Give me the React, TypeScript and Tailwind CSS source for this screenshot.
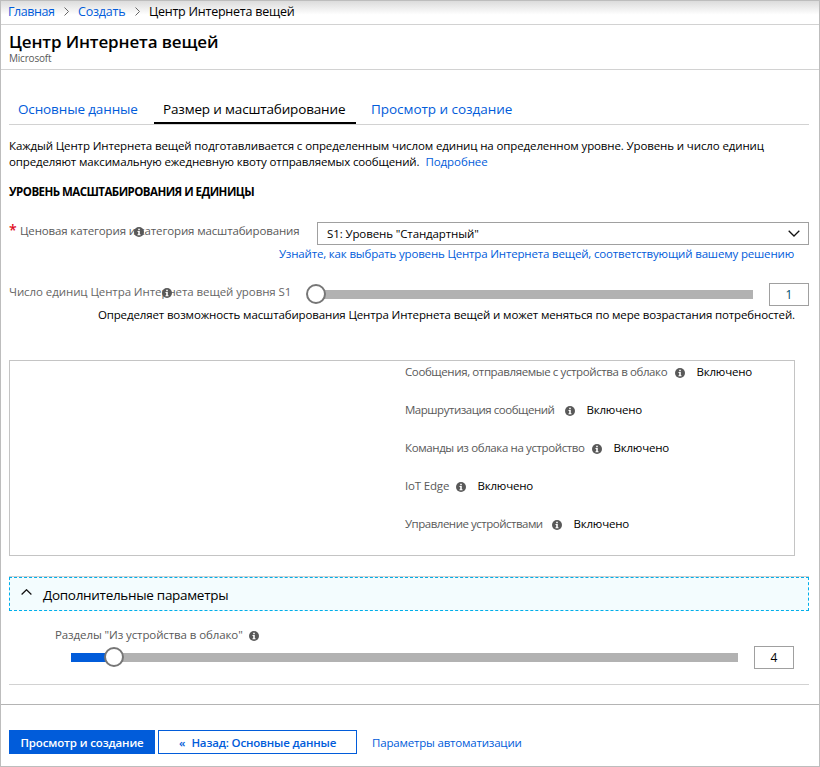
import React from "react";

function InfoIcon({ className = "" }: { className?: string }) {
  return (
    <svg className={`h-[10px] w-[10px] shrink-0 ${className}`} viewBox="0 0 10 10">
      <circle cx="5" cy="5" r="5" fill="#595959" />
      <path d="M4.2 1.7h1.6v1.5H4.2zM3.5 4h2.3v3.3h.7v.9h-3v-.9h.7V4.9h-.7z" fill="#fff" />
    </svg>
  );
}

function Crumb() {
  return (
    <svg className="h-[9px] w-[5px] shrink-0" viewBox="0 0 5 9" fill="none" stroke="#666" strokeWidth="1">
      <path d="M0.5 0.5l4 4-4 4" />
    </svg>
  );
}

function Knob({ className = "" }: { className?: string }) {
  return <div className={`absolute -top-[6px] h-5 w-5 rounded-full border-2 border-[#767676] bg-white ${className}`} />;
}

const features = [
  { label: "Сообщения, отправляемые с устройства в облако", width: "w-[262px] tracking-[-0.39px]", gap: "ml-2" },
  { label: "Маршрутизация сообщений", width: "w-[150px] tracking-[-0.47px]", gap: "ml-[10px]" },
  { label: "Команды из облака на устройство", width: "w-[180px] tracking-[-0.38px]", gap: "ml-[7px]" },
  { label: "IoT Edge", width: "w-[44px] tracking-[-0.17px]", gap: "ml-[7px]" },
  { label: "Управление устройствами", width: "w-[137px] tracking-[-0.49px]", gap: "ml-[10px]" },
];

export default function App() {
  return (
    <div className="flex h-[767px] w-[820px] flex-col overflow-hidden whitespace-nowrap border border-[#bdbdbd] bg-white font-['Open_Sans','Noto_Sans',sans-serif] text-[11.5px] leading-4 text-black">
      <nav className="flex h-6 items-center border-b border-[#d2d2d2] bg-linear-to-b from-[#dcdcdc] to-white to-60% pb-[2px] pl-[7px] text-[12.5px] text-[#015cda]">
        <a className="w-[47px] tracking-[-0.42px]">Главная</a>
        <span className="ml-[9px]"><Crumb /></span>
        <a className="ml-[9px] w-[47px] tracking-[-0.2px]">Создать</a>
        <span className="ml-[10px]"><Crumb /></span>
        <span className="ml-[9px] tracking-[-0.23px] text-black">Центр Интернета вещей</span>
      </nav>

      <header className="h-[45px] border-b border-[#d2d2d2] pl-2 pt-[5px]">
        <h1 className="text-[17px] font-semibold leading-[23px] tracking-[-0.13px]">Центр Интернета вещей</h1>
        <p className="text-[10px] leading-[11px] tracking-[-0.2px] text-[#595959]">Microsoft</p>
      </header>

      <main className="h-[635px] border-b border-[#b4b4b4] px-2">
        <div className="mr-[2px] mt-[27px] flex h-[28px] border-b border-[#d2d2d2] text-[13.5px] leading-6 text-[#015cda]">
          <a className="w-[145px] pl-[9px] tracking-[-0.13px]">Основные данные</a>
          <a className="h-[27px] w-[202px] border-b-2 border-black pl-[9px] tracking-[-0.16px] text-black">Размер и масштабирование</a>
          <a className="pl-[15px] tracking-[-0.03px]">Просмотр и создание</a>
        </div>

        <p className="mt-[13px] tracking-[-0.12px]">Каждый Центр Интернета вещей подготавливается с определенным числом единиц на определенном уровне. Уровень и число единиц</p>
        <p>
          <span className="tracking-[-0.14px]">определяют максимальную ежедневную квоту отправляемых сообщений.</span>
          <a className="ml-[6px] tracking-[-0.08px] text-[#015cda]">Подробнее</a>
        </p>
        <h2 className="mt-[14px] text-[11.5px] font-bold leading-4 tracking-[-0.54px]">УРОВЕНЬ МАСШТАБИРОВАНИЯ И ЕДИНИЦЫ</h2>

        <div className="mr-[2px] mt-[22px] flex h-[23px]">
          <div className="relative w-[308px] text-[#595959]">
            <span className="inline-block w-[11px] text-[14px] font-semibold text-[#e00b1c]">*</span>
            <span className="tracking-[-0.14px]">Ценовая категория и категория масштабирования</span>
            <InfoIcon className="absolute left-[125px] top-[5px]" />
          </div>
          <div className="flex flex-1 items-center justify-between border border-[#a0a0a0] pl-[9px] pr-2">
            <span className="tracking-[-0.11px]">S1: Уровень "Стандартный"</span>
            <svg className="h-[7px] w-3" viewBox="0 0 12 7" fill="none" stroke="#111" strokeWidth="1.3">
              <path d="M.7.8L6 6 11.3.8" />
            </svg>
          </div>
        </div>
        <p className="mr-[17px] mt-px text-right tracking-[-0.17px] text-[#015cda]">Узнайте, как выбрать уровень Центра Интернета вещей, соответствующий вашему решению</p>

        <div className="mr-[2px] mt-[21px] flex h-[23px]">
          <div className="relative w-[299px] pt-px tracking-[-0.08px] text-[#666]">
            Число единиц Центра Интернета вещей уровня S1
            <InfoIcon className="absolute left-[153px] top-[5px]" />
          </div>
          <div className="relative mt-[7px] h-[9px] w-[445px] bg-[#b2b2b2]">
            <Knob className="-left-[2px]" />
          </div>
          <div className="ml-4 w-10 border border-[#a0a0a0] text-center text-[12px] leading-[21px] text-[#00506c]">1</div>
        </div>
        <p className="mr-4 mt-px text-right tracking-[-0.13px]">Определяет возможность масштабирования Центра Интернета вещей и может меняться по мере возрастания потребностей.</p>

        <section className="mt-[37px] flex h-[196px] w-[786px] flex-col gap-[22px] border border-[#c4c4c4] pl-[395px] pt-[3px]">
          {features.map((f) => (
            <div key={f.label} className="flex h-4 items-center">
              <span className={`text-[#595959] ${f.width}`}>{f.label}</span>
              <InfoIcon className={`mt-[2px] ${f.gap}`} />
              <span className="ml-[11.5px] tracking-[-0.2px]">Включено</span>
            </div>
          ))}
        </section>

        <div className="mr-[2px] mt-5 border-t border-[#cfcfcf]">
          <div className="flex h-[34px] items-center border border-dashed border-[#00aeea] bg-[#f3fcfe] pl-[11px] text-[13.5px]">
            <svg className="mb-[4px] h-[6px] w-[11px]" viewBox="0 0 11 6" fill="none" stroke="#111" strokeWidth="1.2">
              <path d="M.6 5.5L5.5.7l4.9 4.8" />
            </svg>
            <span className="ml-[11px] mt-[2px] tracking-[-0.3px]">Дополнительные параметры</span>
          </div>
        </div>

        <div className="ml-[46px] mt-4 flex items-center">
          <span className="w-[190px] tracking-[-0.1px] text-[#595959]">Разделы "Из устройства в облако"</span>
          <InfoIcon className="ml-[4px] mt-[2px]" />
        </div>
        <div className="mr-[2px] flex h-[42px] border-b border-[#d2d2d2] pl-[62px] pt-[3px]">
          <div className="relative mt-[7px] h-[9px] w-[667px] bg-[#b2b2b2]">
            <div className="h-full w-[40px] bg-[#015cda]" />
            <Knob className="left-[33px]" />
          </div>
          <div className="ml-4 h-[23px] w-10 border border-[#a0a0a0] text-center text-[12px] leading-[21px]">4</div>
        </div>
      </main>

      <footer className="flex flex-1 pl-2 pt-[25px] leading-6 text-[#015cda]">
        <button className="h-6 w-[146px] bg-[#015cda] pt-px font-semibold tracking-[-0.13px] text-white">Просмотр и создание</button>
        <button className="ml-[3px] flex h-6 w-[199px] items-center border border-[#015cda] pl-5 pt-px font-semibold">
          <span>«</span><span className="ml-[6px] tracking-[-0.16px]">Назад: Основные данные</span>
        </button>
        <a className="ml-[15px] mt-px tracking-[-0.19px]">Параметры автоматизации</a>
      </footer>
    </div>
  );
}
